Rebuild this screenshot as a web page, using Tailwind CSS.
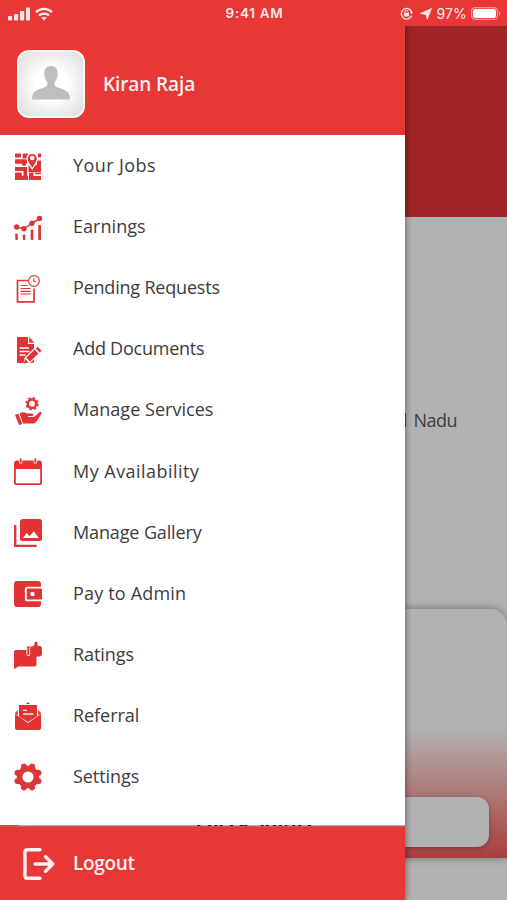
<!DOCTYPE html>
<html lang="en">
<head>
<meta charset="utf-8">
<title>Menu</title>
<script src="https://cdn.jsdelivr.net/npm/@tailwindcss/browser@4"></script>
</head>
<body class="bg-[#b2b2b2]">
<div class="relative flex h-[900px] w-[507px] flex-col overflow-hidden bg-[#b2b2b2] font-['Open_Sans','Noto_Sans',sans-serif] text-[#3c3c3e]">

  <!-- Status bar -->
  <header class="relative z-20 flex h-[26px] shrink-0 items-center justify-between bg-[#e73837] pl-2 pr-[6px] pt-px font-[Inter,sans-serif] text-[#ffe9e7]">
    <div class="flex w-[150px] items-center gap-[5px]">
      <svg class="h-[14px] w-[22px]" viewBox="0 0 22 14" fill="currentColor"><rect x="0" y="9" width="4.2" height="4.5" rx="1"/><rect x="6" y="7" width="4.2" height="6.5" rx="1"/><rect x="12" y="4" width="4.2" height="9.5" rx="1"/><rect x="18" y="0.5" width="4" height="13" rx="1"/></svg>
      <svg class="h-[14px] w-[18px]" viewBox="0 0 18 14" fill="none" stroke="currentColor" stroke-width="2.4"><path d="M1 5.2C5.5.7 12.500.7 17 5.200M4 8.600C6.800 5.900 11.200 5.900 14 8.600"/><path d="M9 13.500 6.200 10.800Q9 8.600 11.800 10.800Z" fill="currentColor" stroke="none"/></svg>
    </div>
    <p class="text-[13.5px] font-semibold tracking-[0.7px]">9:41 AM</p>
    <div class="flex w-[150px] items-center justify-end">
      <svg class="mr-[7px] h-[13px] w-[13px]" viewBox="0 0 13 13" fill="none" stroke="currentColor" stroke-width="1.3"><path d="M11.600 8.700A5.300 5.300 0 1 1 11.800 5.500"/><path d="M9.900 5h3l-1.300 2.200z" fill="currentColor" stroke="none"/><rect x="4" y="6" width="5" height="3.500" rx=".5" fill="currentColor" stroke="none"/><path d="M5 6V4.900a1.500 1.500 0 0 1 3 0V6" stroke-width="1"/></svg>
      <svg class="mr-[5px] h-[12px] w-[12px]" viewBox="0 0 12 12" fill="currentColor" stroke="currentColor" stroke-width=".8" stroke-linejoin="round"><path d="M11.400.6 7.200 11.400 6.200 6.500.6 5.400Z"/></svg>
      <span class="mr-[4px] text-[14px] tracking-[0.1px]">97%</span>
      <svg class="h-[13px] w-[30px]" viewBox="0 0 29 13" preserveAspectRatio="none"><rect x=".6" y=".6" width="25" height="11.800" rx="3.500" fill="none" stroke="#f79a98" stroke-width="1.200"/><rect x="2" y="2" width="22.200" height="9" rx="2.200" fill="#fff"/><path d="M27 4.300v4.400q1.500-.8 1.500-2.200T27 4.300" fill="#f79a98"/></svg>
    </div>
  </header>

  <!-- Dimmed page under the drawer -->
  <main class="flex grow flex-col">
    <div class="h-[191px] shrink-0 bg-[#a12527]"></div>
    <div class="flex h-[392px] shrink-0 justify-end pr-[50px] pt-[190px]">
      <p class="text-[18px] leading-[26px] tracking-[-0.5px]">Tamil <span class="ml-[2.5px]">Nadu</span></p>
    </div>
    <section class="flex h-[249px] shrink-0 flex-col justify-end rounded-t-[17px] bg-linear-to-b from-[#b2b2b2] from-48% via-[#ad8080] via-70% to-[#a73d3f] px-[18px] pb-[11px] shadow-[0_0_9px_rgba(0,0,0,0.4)]">
      <div class="flex h-[50px] items-center justify-center rounded-[12px] bg-[#b2b2b2] text-[18px] font-bold text-[#221414] shadow-[0_1px_5px_rgba(60,0,0,0.35)]">Check Status</div>
    </section>
  </main>

  <!-- Drawer -->
  <aside class="absolute left-0 top-0 z-10 flex h-[900px] w-[405px] flex-col shadow-[1px_0_6px_rgba(0,0,0,0.4)]">
    <div class="flex h-[135px] shrink-0 items-center gap-[18px] bg-[#e73837] pl-[17px] pt-[33px]">
      <div class="flex h-[68px] w-[68px] items-center justify-center rounded-[12px] border-2 border-[#fff5f3] bg-radial from-white from-35% to-[#d9dada]">
        <svg class="-mt-[3px] h-[34px] w-[38px]" viewBox="0 0 38 34" fill="#bdbebe"><path d="M19 0c5 0 7.300 3.500 6.600 9-.2 3-1.200 5.500-2.900 7.300-.6 3 .4 4.600 4.300 5.800 7.500 2.200 11 4.200 11 11.400H0c0-7.200 3.500-9.200 11-11.400 3.900-1.200 4.900-2.800 4.300-5.800C13.600 14.500 12.600 12 12.400 9 11.700 3.500 14 0 19 0Z"/></svg>
      </div>
      <h1 class="text-[19px] font-semibold tracking-[-0.1px] text-[#fff0ee]">Kiran Raja</h1>
    </div>

    <nav class="h-[690px] shrink-0 bg-white text-[18px]">
      <ul class="flex flex-col text-[#3c3c3e]">
        <li class="flex h-[61.1px] items-center gap-[31px] pl-[14px]">
          <svg class="h-7 w-7 text-[#e23334]" viewBox="0 0 28 28" fill="currentColor"><path d="M1 1.500h6v4H1zM8.700 1.500H14v5H8.700zM24 1.500h3v4h-3zM1 7.300h12v4.400H1zM8 9h4v4.500H8zM1 15h12v9h-3.500v-5H1zM1 20.500h6.700v3.300H14V28H1zM14.500 13h12.500v7.500H14.500zM23 8.500h4V16h-4zM15 19h4.500v5H27v4H15zM21 19h6v3.300h-6z"/><path d="M14.500 20.500H27" stroke="#fff" stroke-width=".6"/><path d="M18.200 17c-3-5-5.200-7.200-5.200-10.500a5.200 5.200 0 0 1 10.400 0c0 3.300-2.200 5.500-5.200 10.500Z" stroke="#fff" stroke-width="1.300"/><circle cx="18.200" cy="6" r="2.300" fill="#fff"/></svg>
          <span class="tracking-[0.42px]">Your Jobs</span>
        </li>
        <li class="flex h-[61.1px] items-center gap-[31px] pl-[14px]">
          <svg class="mt-0.5 h-7 w-7 text-[#dc3638]" viewBox="0 0 28 28" fill="currentColor"><circle cx="2.600" cy="13" r="2.700"/><circle cx="10" cy="14.800" r="2.700"/><circle cx="18" cy="9.300" r="2.700"/><circle cx="25.500" cy="4.500" r="2.700"/><path d="M2.600 13 10 14.800 18 9.300 25.500 4.500" fill="none" stroke="currentColor" stroke-width="1.500"/><rect x="1.300" y="19.500" width="2.500" height="6.500" rx=".8"/><rect x="8.800" y="20.500" width="2.500" height="5.500" rx=".8"/><rect x="16.700" y="15.500" width="2.700" height="10.500" rx=".8"/><rect x="24.200" y="11" width="2.800" height="15" rx=".8"/></svg>
          <span class="tracking-[0.05px]">Earnings</span>
        </li>
        <li class="flex h-[61.1px] items-center gap-[31px] pl-[14px]">
          <svg class="mt-0.5 h-7 w-7 text-[#dc3638]" viewBox="0 0 28 28" fill="none" stroke="currentColor"><path d="M14 5.500H3.500V26.800H20V13.500" stroke-width="1.700"/><circle cx="20" cy="6" r="5.400" stroke-width="1.200"/><path d="M19.800 3.500v3h2" stroke-width="1.100"/><path d="M6.500 10.500h7M6.500 13.500h10M6.500 16.300h10M6.500 19h10" stroke-width="1.200"/></svg>
          <span class="tracking-[-0.2px]">Pending Requests</span>
        </li>
        <li class="flex h-[61.1px] items-center gap-[31px] pl-[14px]">
          <svg class="mt-0.5 h-7 w-7 text-[#e23334]" viewBox="0 0 28 28"><path d="M3 1h11v7h6v17q0 2-2 2H3Z" fill="currentColor"/><path d="M15.200 1 20.400 6.700H15.200Z" fill="currentColor"/><path d="M5.500 12h9.500M5.500 15.500h10M5.500 19h6" stroke="#fff" stroke-width="1.300"/><path d="m9.500 27.500 1.200-6L22 10.500l5.500 5.500L16 27Z" fill="#fff"/><path d="m9.700 27.800 1.500-4.800 3.300 3.300ZM12.300 21.700 20.600 13.500l3.900 3.900-8.300 8.200ZM21.800 12.500l1.800-1.700 3.900 3.900-1.800 1.700Z" fill="currentColor"/></svg>
          <span class="tracking-[-0.24px]">Add Documents</span>
        </li>
        <li class="flex h-[61.1px] items-center gap-[31px] pl-[14px]">
          <svg class="mt-0.5 h-7 w-7 text-[#e23334]" viewBox="0 0 28 28"><circle cx="18" cy="6.700" r="4.100" fill="none" stroke="currentColor" stroke-width="2.500"/><circle cx="18" cy="6.700" r="5.800" fill="none" stroke="currentColor" stroke-width="1.800" stroke-dasharray="2.400 2.155"/><path d="m1 17.800 3.300-1 4 10-3.200 1.400Z" fill="currentColor"/><path d="M5.500 16.800c3-2.300 5-1.800 7.500-.2h5c2 .1 2 2.300 0 2.500h-4v1h5.500c3-1 4.200-4.300 6.500-5 1.800-.5 2 .8 1.300 2-2 3.300-3.600 6-5.300 8-1 1.200-2 1.500-3.500 1.500H9Z" fill="currentColor"/></svg>
          <span class="tracking-[0.03px]">Manage Services</span>
        </li>
        <li class="flex h-[61.1px] items-center gap-[31px] pl-[14px]">
          <svg class="mt-0.5 h-7 w-7 text-[#e23334]" viewBox="0 0 28 28"><rect x=".9" y="3.400" width="26.200" height="22.800" rx="2" fill="none" stroke="currentColor" stroke-width="1.800"/><path d="M1 4h26v7H1Z" fill="currentColor"/><path d="M6.700 1.500v2.500M21.300 1.500v2.500" stroke="#fff" stroke-width="3.600" stroke-linecap="round"/><path d="M6.700 1.200v2.800M21.300 1.200v2.800" stroke="currentColor" stroke-width="1.900" stroke-linecap="round"/></svg>
          <span class="tracking-[0.47px]">My Availability</span>
        </li>
        <li class="flex h-[61.1px] items-center gap-[31px] pl-[14px]">
          <svg class="mt-0.5 h-7 w-7 text-[#e23334]" viewBox="0 0 28 28"><rect x="6" width="22" height="22" rx="2.500" fill="currentColor"/><path d="M1.200 6v20.800H22.500" fill="none" stroke="currentColor" stroke-width="2.300"/><path d="m9 18.900 3.800-5.200 2.700 3.500 4.300-5 5 6.700Z" fill="#fff"/></svg>
          <span class="tracking-[-0.13px]">Manage Gallery</span>
        </li>
        <li class="flex h-[61.1px] items-center gap-[31px] pl-[14px]">
          <svg class="mt-0.5 h-7 w-7 text-[#e23334]" viewBox="0 0 28 28"><path d="M3 1h21q3 0 3 3v20q0 3-3 3H3q-3 0-3-3V4q0-3 3-3Z" fill="currentColor"/><path d="M29 6.700H13.500q-2.600 0-2.600 2.600v9.400q0 2.600 2.600 2.600H29Z" fill="#fff"/><rect x="12.800" y="8.500" width="15.200" height="11" rx="1" fill="currentColor"/><circle cx="18.400" cy="14" r="2.200" fill="#fff"/></svg>
          <span class="tracking-[0.18px]">Pay to Admin</span>
        </li>
        <li class="flex h-[61.1px] items-center gap-[31px] pl-[14px]">
          <svg class="mt-0.5 h-7 w-7 text-[#e23334]" viewBox="0 0 28 28"><path d="M1.500 9H13V5.500h5L20.500 4V1.700q1.500-2.200 3 0l.2 3.300H26q2 0 2 3.300v4.200q-.2 3-2.500 3h-3V23.500q0 2-2 2H4.500L0 28V10.500Q0 9 1.500 9Z" fill="currentColor"/><path d="M12.900 7v6.500q0 1 1 1h1.800V6.300" fill="none" stroke="#ffe5e4" stroke-width="1"/></svg>
          <span class="tracking-[-0.06px]">Ratings</span>
        </li>
        <li class="flex h-[61.1px] items-center gap-[31px] pl-[14px]">
          <svg class="mt-0.5 h-7 w-7 text-[#e23334]" viewBox="0 0 28 28"><path d="M1 12v14q0 2 2 2h22q2 0 2-2V12l-13 9Z" fill="currentColor"/><path d="M5 3h18v11.500l-9 5.500-9-5.500ZM12 2l2-2 2 2ZM3.800 8v5.400L.7 11.200ZM24.200 8v5.400l3.100-2.200Z" fill="currentColor"/><path d="M9 8.300h4M9 12h10.500" stroke="#ffe9e8" stroke-width="1.300"/></svg>
          <span class="tracking-[-0.05px]">Referral</span>
        </li>
        <li class="flex h-[61.1px] items-center gap-[31px] pl-[14px]">
          <svg class="mt-0.5 h-7 w-7 text-[#dc3638]" viewBox="0 0 28 28"><g stroke="currentColor" stroke-width="6" stroke-linecap="round"><path d="m9.900 3.500 8.200 21M18.100 3.500l-8.200 21M3.500 9.900l21 8.200M3.500 18.100l21-8.200"/></g><circle cx="14" cy="14" r="11.200" fill="currentColor"/><circle cx="14" cy="14" r="5.600" fill="#fff"/></svg>
          <span class="tracking-[-0.07px]">Settings</span>
        </li>
      </ul>
    </nav>

    <footer class="mt-px flex h-[74px] shrink-0 items-center gap-[18px] border-t border-[#c75755] bg-[#e73837] pl-[23px]">
      <svg class="h-[32px] w-[32px]" viewBox="0 0 32 32" fill="none" stroke="#fff0ee" stroke-width="3.400" stroke-linecap="round" stroke-linejoin="round"><path d="M17 1.700H4.500Q2 1.700 2 4.200V27.800Q2 30.300 4.500 30.300H17M12 16H29.500M22.500 8.800 29.700 16l-7.200 7.200"/></svg>
      <span class="text-[19px] font-semibold tracking-[-0.3px] text-[#fff0ee]">Logout</span>
    </footer>
  </aside>
</div>
</body>
</html>
